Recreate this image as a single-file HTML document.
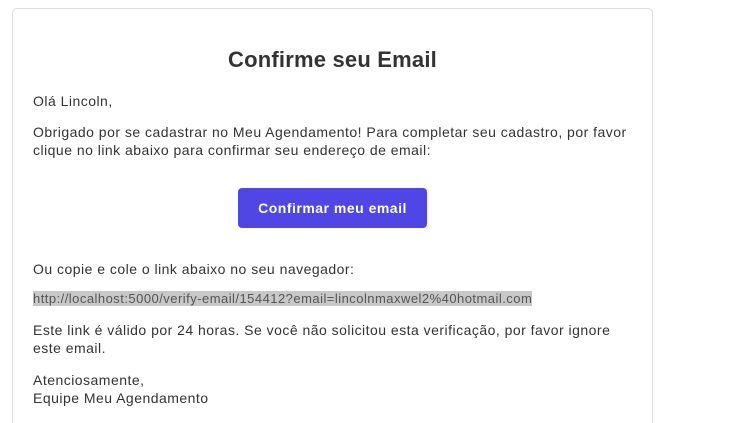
<!DOCTYPE html>
<html><head><meta charset="utf-8"><style>
html,body{margin:0;width:754px;height:423px;overflow:hidden}
body{background:#fff;font-family:"Liberation Sans",Arial,sans-serif;color:#333;position:relative}
.card{position:absolute;left:12px;top:8px;width:641px;height:415px;border:1px solid #ddd;border-bottom:none;border-radius:5px 5px 0 0;box-sizing:border-box}
.t{position:absolute;left:33px;font-size:14px;line-height:18px;white-space:nowrap;color:#333;letter-spacing:0.48px}
h1{position:absolute;left:12px;width:641px;top:46px;margin:0;text-align:center;font-size:22px;font-weight:bold;line-height:28px;color:#333;letter-spacing:0.2px}
.btn{position:absolute;left:238px;top:188px;width:189px;height:40px;background:#4f46e5;border-radius:4px;color:#fff;font-weight:bold;font-size:14px;line-height:40px;text-align:center;letter-spacing:0.5px}
.url{background:#c8c8c8;font-size:13px;color:#555;line-height:15px;letter-spacing:0.47px}
</style></head><body>
<div class="card"></div>
<h1>Confirme seu Email</h1>
<div class="t" style="top:92px">Olá Lincoln,</div>
<div class="t" style="top:123px">Obrigado por se cadastrar no Meu Agendamento! Para completar seu cadastro, por favor<br>clique no link abaixo para confirmar seu endereço de email:</div>
<div class="btn">Confirmar meu email</div>
<div class="t" style="top:260px">Ou copie e cole o link abaixo no seu navegador:</div>
<div class="t" style="top:291px;line-height:15px"><span class="url">http://localhost:5000/verify-email/154412?email=lincolnmaxwel2%40hotmail.com</span></div>
<div class="t" style="top:321px">Este link é válido por 24 horas. Se você não solicitou esta verificação, por favor ignore<br>este email.</div>
<div class="t" style="top:371px">Atenciosamente,<br>Equipe Meu Agendamento</div>
</body></html>
